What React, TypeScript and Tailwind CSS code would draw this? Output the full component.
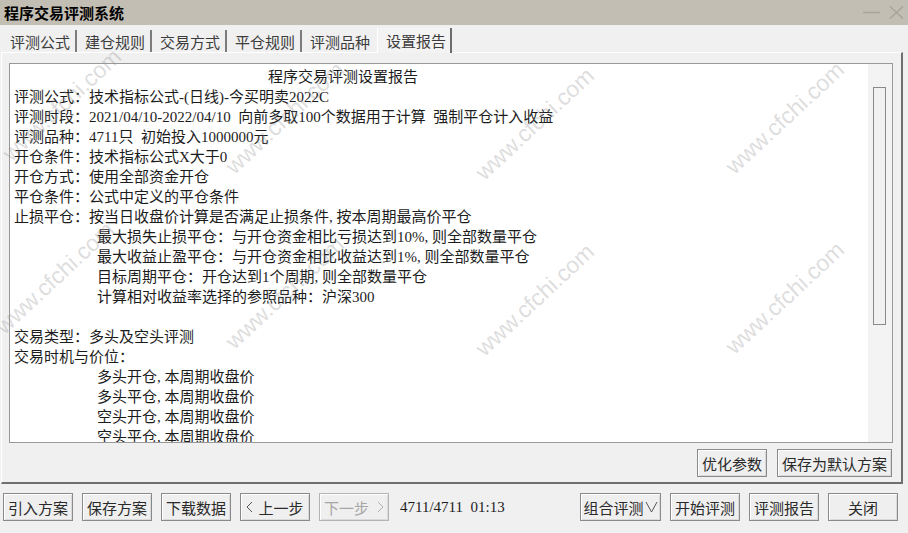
import React from "react";

const lines: [number, string][] = [
  [0, "评测公式：技术指标公式-(日线)-今买明卖2022C"],
  [0, "评测时段：2021/04/10-2022/04/10  向前多取100个数据用于计算  强制平仓计入收益"],
  [0, "评测品种：4711只  初始投入1000000元"],
  [0, "开仓条件：技术指标公式X大于0"],
  [0, "开仓方式：使用全部资金开仓"],
  [0, "平仓条件：公式中定义的平仓条件"],
  [0, "止损平仓：按当日收盘价计算是否满足止损条件, 按本周期最高价平仓"],
  [1, "最大损失止损平仓：与开仓资金相比亏损达到10%, 则全部数量平仓"],
  [1, "最大收益止盈平仓：与开仓资金相比收益达到1%, 则全部数量平仓"],
  [1, "目标周期平仓：开仓达到1个周期, 则全部数量平仓"],
  [1, "计算相对收益率选择的参照品种：沪深300"],
  [0, ""],
  [0, "交易类型：多头及空头评测"],
  [0, "交易时机与价位："],
  [1, "多头开仓, 本周期收盘价"],
  [1, "多头平仓, 本周期收盘价"],
  [1, "空头开仓, 本周期收盘价"],
  [1, "空头平仓, 本周期收盘价"],
];

const marks: [number, number][] = [
  [62, 105],
  [285, 118],
  [535, 124],
  [785, 118],
  [55, 278],
  [285, 293],
  [535, 300],
  [785, 298],
];

function Btn({
  children,
  w,
  disabled,
}: {
  children: React.ReactNode;
  w: string;
  disabled?: boolean;
}) {
  return (
    <div
      className={
        "h-[28px] flex items-center justify-center border bg-[#efefef] shadow-[inset_1px_1px_0_#ffffff,inset_-1px_-1px_0_#dadada] text-[15px] leading-none font-['Noto_Sans_CJK_SC',sans-serif] " +
        w +
        (disabled ? " border-[#b4b4b4] text-[#a6a6a6]" : " border-[#8a8a8a] text-[#2a2a2a]")
      }
    >
      {children}
    </div>
  );
}

const tabs = ["评测公式", "建仓规则", "交易方式", "平仓规则", "评测品种"];

export default function App() {
  return (
    <div className="relative w-[908px] h-[533px] overflow-hidden bg-[#f0f0f0] font-['Liberation_Serif','Noto_Sans_CJK_SC',serif] text-[15px] text-[#1c1c1c]">
      {/* title bar */}
      <div className="h-[25px] bg-[#c3beb3] flex items-center justify-between pl-[4px] pr-[4px]">
        <span className="font-['Noto_Sans_CJK_SC',sans-serif] font-bold text-[15px] leading-none text-black">
          程序交易评测系统
        </span>
        <div className="flex items-center gap-[9px]">
          <svg width="17" height="13" viewBox="0 0 17 13">
            <line x1="0" y1="6.5" x2="17" y2="6.5" stroke="#a8a49b" strokeWidth="1.5" />
          </svg>
          <svg width="15" height="13" viewBox="0 0 15 13">
            <line x1="1" y1="0.5" x2="14" y2="12.5" stroke="#a8a49b" strokeWidth="1.5" />
            <line x1="14" y1="0.5" x2="1" y2="12.5" stroke="#a8a49b" strokeWidth="1.5" />
          </svg>
        </div>
      </div>

      {/* tabs */}
      <div className="h-[27px] flex items-end pl-[2px] font-['Noto_Sans_CJK_SC',sans-serif] text-[#3c3c3c]">
        {tabs.map((t, i) => (
          <div
            key={t}
            className={
              "w-[75px] h-[22px] flex items-center pl-[8px] text-[15px] leading-none " +
              (i < 4 ? "border-r-2 border-r-[#7c7c7c]" : "")
            }
          >
            {t}
          </div>
        ))}
        <div className="w-[75px] h-[25px] flex items-center pl-[8px] text-[15px] leading-none border-r-2 border-r-[#6c6c6c] border-l border-l-white bg-[#f3f3f3] -mb-[1px]">
          设置报告
        </div>
      </div>

      {/* panel */}
      <div className="ml-[1px] w-[902px] h-[432px] border-t border-l border-t-white border-l-white border-r-2 border-b-2 border-r-[#6f6f6f] border-b-[#6f6f6f] pt-[10px] pl-[7px] pr-[8px] flex flex-col">
        <div className="h-[380px] w-[884px] border border-[#999999] flex">
          <div className="flex-1 bg-white pl-[4px] pt-[3px] overflow-hidden">
            <div className="leading-[20px] h-[20px] pl-[254px] whitespace-pre">程序交易评测设置报告</div>
            {lines.map(([ind, s], i) => (
              <div
                key={i}
                className={"leading-[20px] h-[20px] whitespace-pre " + (ind ? "pl-[83px]" : "")}
              >
                {s}
              </div>
            ))}
          </div>
          <div className="w-[24px] bg-[#f3f3f3] pt-[23px] pl-[5px]">
            <div className="w-[13px] h-[238px] border border-[#8a8a8a] bg-[#f1f1f1]" />
          </div>
        </div>
        <div className="mt-[6px] flex justify-end gap-[10px] pr-[1px]">
          <Btn w="w-[70px]">优化参数</Btn>
          <Btn w="w-[115px]">保存为默认方案</Btn>
        </div>
      </div>

      {/* bottom bar */}
      <div className="mt-[9px] flex items-center pl-[3px] pr-[10px]">
        <div className="flex gap-[9px]">
          <Btn w="w-[70px]">引入方案</Btn>
          <Btn w="w-[70px]">保存方案</Btn>
          <Btn w="w-[70px]">下载数据</Btn>
          <Btn w="w-[70px]">
            <svg width="7" height="12" viewBox="0 0 7 12" className="mr-[5px]">
              <polyline points="6,1 1,6 6,11" fill="none" stroke="#555555" strokeWidth="1" />
            </svg>
            上一步
          </Btn>
          <Btn w="w-[70px]" disabled>
            下一步
            <svg width="7" height="12" viewBox="0 0 7 12" className="ml-[8px]">
              <polyline points="1,1 6,6 1,11" fill="none" stroke="#b0b0b0" strokeWidth="1" />
            </svg>
          </Btn>
        </div>
        <span className="ml-[11px] text-[15px] leading-none text-[#1c1c1c] whitespace-pre">4711/4711  01:13</span>
        <div className="ml-auto flex gap-[9px]">
          <Btn w="w-[81px]">
            组合评测
            <svg width="13" height="12" viewBox="0 0 13 12" className="ml-[1px]">
              <polyline points="1,1 6.5,11 12,1" fill="none" stroke="#555555" strokeWidth="1" />
            </svg>
          </Btn>
          <Btn w="w-[70px]">开始评测</Btn>
          <Btn w="w-[70px]">评测报告</Btn>
          <Btn w="w-[70px]">关闭</Btn>
        </div>
      </div>

      {/* watermarks */}
      {marks.map(([x, y], i) => (
        <div
          key={i}
          className="absolute pointer-events-none font-['Liberation_Sans',sans-serif] text-[23px] leading-none text-[rgba(140,140,140,0.3)] whitespace-nowrap -translate-x-1/2 -translate-y-1/2 -rotate-[43deg]"
          style={{ left: x, top: y }}
        >
          www.cfchi.com
        </div>
      ))}
    </div>
  );
}
